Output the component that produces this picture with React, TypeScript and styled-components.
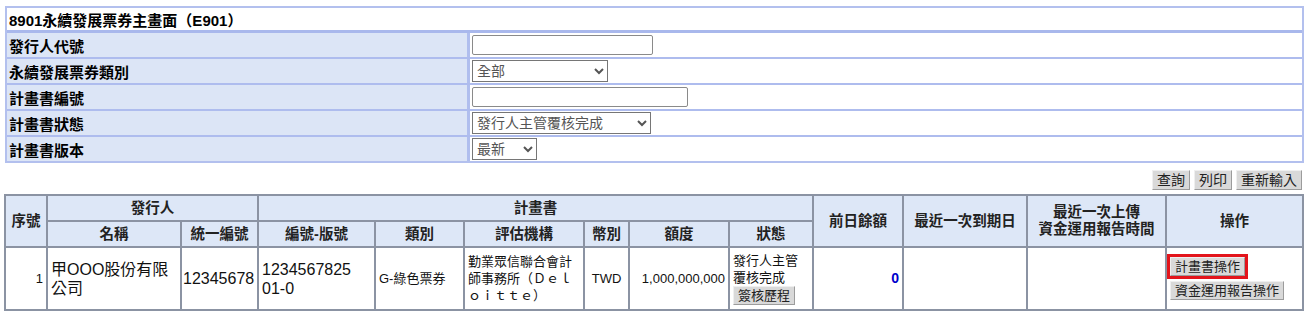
import React from 'react';
import styled, { createGlobalStyle } from 'styled-components';

const GlobalStyle = createGlobalStyle`
    body {
        margin: 0;
        background: #ffffff;
        font-family: "Liberation Sans", "Noto Sans CJK TC", sans-serif;
        color: #000;
    }
`;

const Page = styled.div`
    padding: 6px 9px 0 4px;
`;

const FormPanel = styled.div`
    margin-left: 1px;
    border: 2px solid #b3c0ee;
    background: #ffffff;
`;

const TitleRow = styled.div`
    height: 22px;
    display: flex;
    align-items: center;
    padding-left: 2px;
    font-size: 15px;
    font-weight: bold;
    border-bottom: 3px solid #a9b8ec;
`;

const FieldRow = styled.div`
    display: grid;
    grid-template-columns: 463px 1fr;
    height: 24px;
    & + & {
        border-top: 2px solid #aebcee;
    }
`;

const Label = styled.div`
    display: flex;
    align-items: center;
    padding-left: 2px;
    background: #dce5f6;
    border-right: 3px solid #b0beee;
    font-size: 15px;
    font-weight: bold;
`;

const Value = styled.div`
    display: flex;
    align-items: center;
    padding-left: 2px;
`;

const TextInput = styled.input<{ $w: number }>`
    box-sizing: border-box;
    width: ${p => p.$w}px;
    height: 20px;
    border: 1px solid #8a8a8a;
    border-radius: 2px;
    padding: 0 3px;
    font-size: 14px;
    font-family: "Liberation Sans", "Noto Sans CJK TC", sans-serif;
`;

const Select = styled.select<{ $w: number }>`
    box-sizing: border-box;
    width: ${p => p.$w}px;
    height: 22px;
    border: 1px solid #767676;
    border-radius: 0;
    background: #fff;
    color: #555;
    font-size: 14px;
    font-family: "Liberation Sans", "Noto Sans CJK TC", sans-serif;
`;

const ButtonBar = styled.div`
    display: flex;
    justify-content: flex-end;
    gap: 4px;
    margin-top: 7px;
    padding-right: 2px;
`;

const Btn = styled.button<{ $size?: number; $marked?: boolean }>`
    font-family: "Liberation Sans", "Noto Sans CJK TC", sans-serif;
    font-size: ${p => p.$size ?? 13}px;
    line-height: ${p => (p.$size ?? 13) + 2}px;
    padding: 1px 4px;
    margin: 0;
    color: #222;
    background: #d9d9d9;
    border: 1px solid;
    border-color: #efefef #9c9c9c #9c9c9c #efefef;
    border-radius: 0;
    outline: ${p => (p.$marked ? '3px solid #e3141b' : 'none')};
`;

const DataTable = styled.table`
    margin-top: 4px;
    border-collapse: separate;
    border-spacing: 0;
    table-layout: fixed;
    width: 1300px;
    border: 1px solid #8b93a3;
`;

const Th = styled.th`
    background: #dde7f7;
    border: 1px solid #8b93a3;
    font-size: 14.5px;
    font-weight: bold;
    color: #222;
    height: 24px;
    padding: 0 2px;
    line-height: 17px;
    font-family: "Liberation Sans", "Noto Sans CJK TC", sans-serif;
`;

const Td = styled.td<{ $align?: string; $size?: number; $pad?: string }>`
    border: 1px solid #8b93a3;
    height: 59px;
    padding: ${p => p.$pad ?? '1px 3px'};
    text-align: ${p => p.$align ?? 'left'};
    font-size: ${p => p.$size ?? 13}px;
    line-height: ${p => ((p.$size ?? 13) >= 16 ? 19 : 17)}px;
    vertical-align: middle;
    word-break: break-all;
    color: #111;
`;

const Amount = styled.span`
    color: #0000cc;
    font-weight: bold;
    font-size: 14px;
`;

const OpStack = styled.div`
    display: flex;
    flex-direction: column;
    align-items: flex-start;
    gap: 5px;
`;

const colWidths = [42, 134, 77, 117, 89, 120, 45, 100, 84, 90, 124, 139, 137];

export default function App() {
    return (
        <Page>
            <GlobalStyle />
            <FormPanel>
                <TitleRow>8901永續發展票券主畫面（E901）</TitleRow>
                <FieldRow>
                    <Label>發行人代號</Label>
                    <Value><TextInput $w={181} /></Value>
                </FieldRow>
                <FieldRow>
                    <Label>永續發展票券類別</Label>
                    <Value>
                        <Select $w={136} defaultValue="all">
                            <option value="all">全部</option>
                        </Select>
                    </Value>
                </FieldRow>
                <FieldRow>
                    <Label>計畫書編號</Label>
                    <Value><TextInput $w={216} /></Value>
                </FieldRow>
                <FieldRow>
                    <Label>計畫書狀態</Label>
                    <Value>
                        <Select $w={179} defaultValue="done">
                            <option value="done">發行人主管覆核完成</option>
                        </Select>
                    </Value>
                </FieldRow>
                <FieldRow>
                    <Label>計畫書版本</Label>
                    <Value>
                        <Select $w={65} defaultValue="new">
                            <option value="new">最新</option>
                        </Select>
                    </Value>
                </FieldRow>
            </FormPanel>

            <ButtonBar>
                <Btn $size={14}>查詢</Btn>
                <Btn $size={14}>列印</Btn>
                <Btn $size={14}>重新輸入</Btn>
            </ButtonBar>

            <DataTable>
                <colgroup>
                    {colWidths.map((w, i) => <col key={i} style={{ width: w }} />)}
                </colgroup>
                <thead>
                    <tr>
                        <Th rowSpan={2}>序號</Th>
                        <Th colSpan={2}>發行人</Th>
                        <Th colSpan={6}>計畫書</Th>
                        <Th rowSpan={2}>前日餘額</Th>
                        <Th rowSpan={2}>最近一次到期日</Th>
                        <Th rowSpan={2}>最近一次上傳<br />資金運用報告時間</Th>
                        <Th rowSpan={2}>操作</Th>
                    </tr>
                    <tr>
                        <Th>名稱</Th>
                        <Th>統一編號</Th>
                        <Th>編號-版號</Th>
                        <Th>類別</Th>
                        <Th>評估機構</Th>
                        <Th>幣別</Th>
                        <Th>額度</Th>
                        <Th>狀態</Th>
                    </tr>
                </thead>
                <tbody>
                    <tr>
                        <Td $align="right">1</Td>
                        <Td $size={16}>甲OOO股份有限公司</Td>
                        <Td $size={16} $pad="1px">12345678</Td>
                        <Td $size={16}>1234567825<br />01-0</Td>
                        <Td>G-綠色票券</Td>
                        <Td>勤業眾信聯合會計師事務所（Ｄｅｌｏｉｔｔｅ）</Td>
                        <Td $align="center">TWD</Td>
                        <Td $align="right">1,000,000,000</Td>
                        <Td>
                            發行人主管覆核完成
                            <div><Btn>簽核歷程</Btn></div>
                        </Td>
                        <Td $align="right"><Amount>0</Amount></Td>
                        <Td></Td>
                        <Td></Td>
                        <Td>
                            <OpStack>
                                <Btn $marked>計畫書操作</Btn>
                                <Btn>資金運用報告操作</Btn>
                            </OpStack>
                        </Td>
                    </tr>
                </tbody>
            </DataTable>
        </Page>
    );
}
